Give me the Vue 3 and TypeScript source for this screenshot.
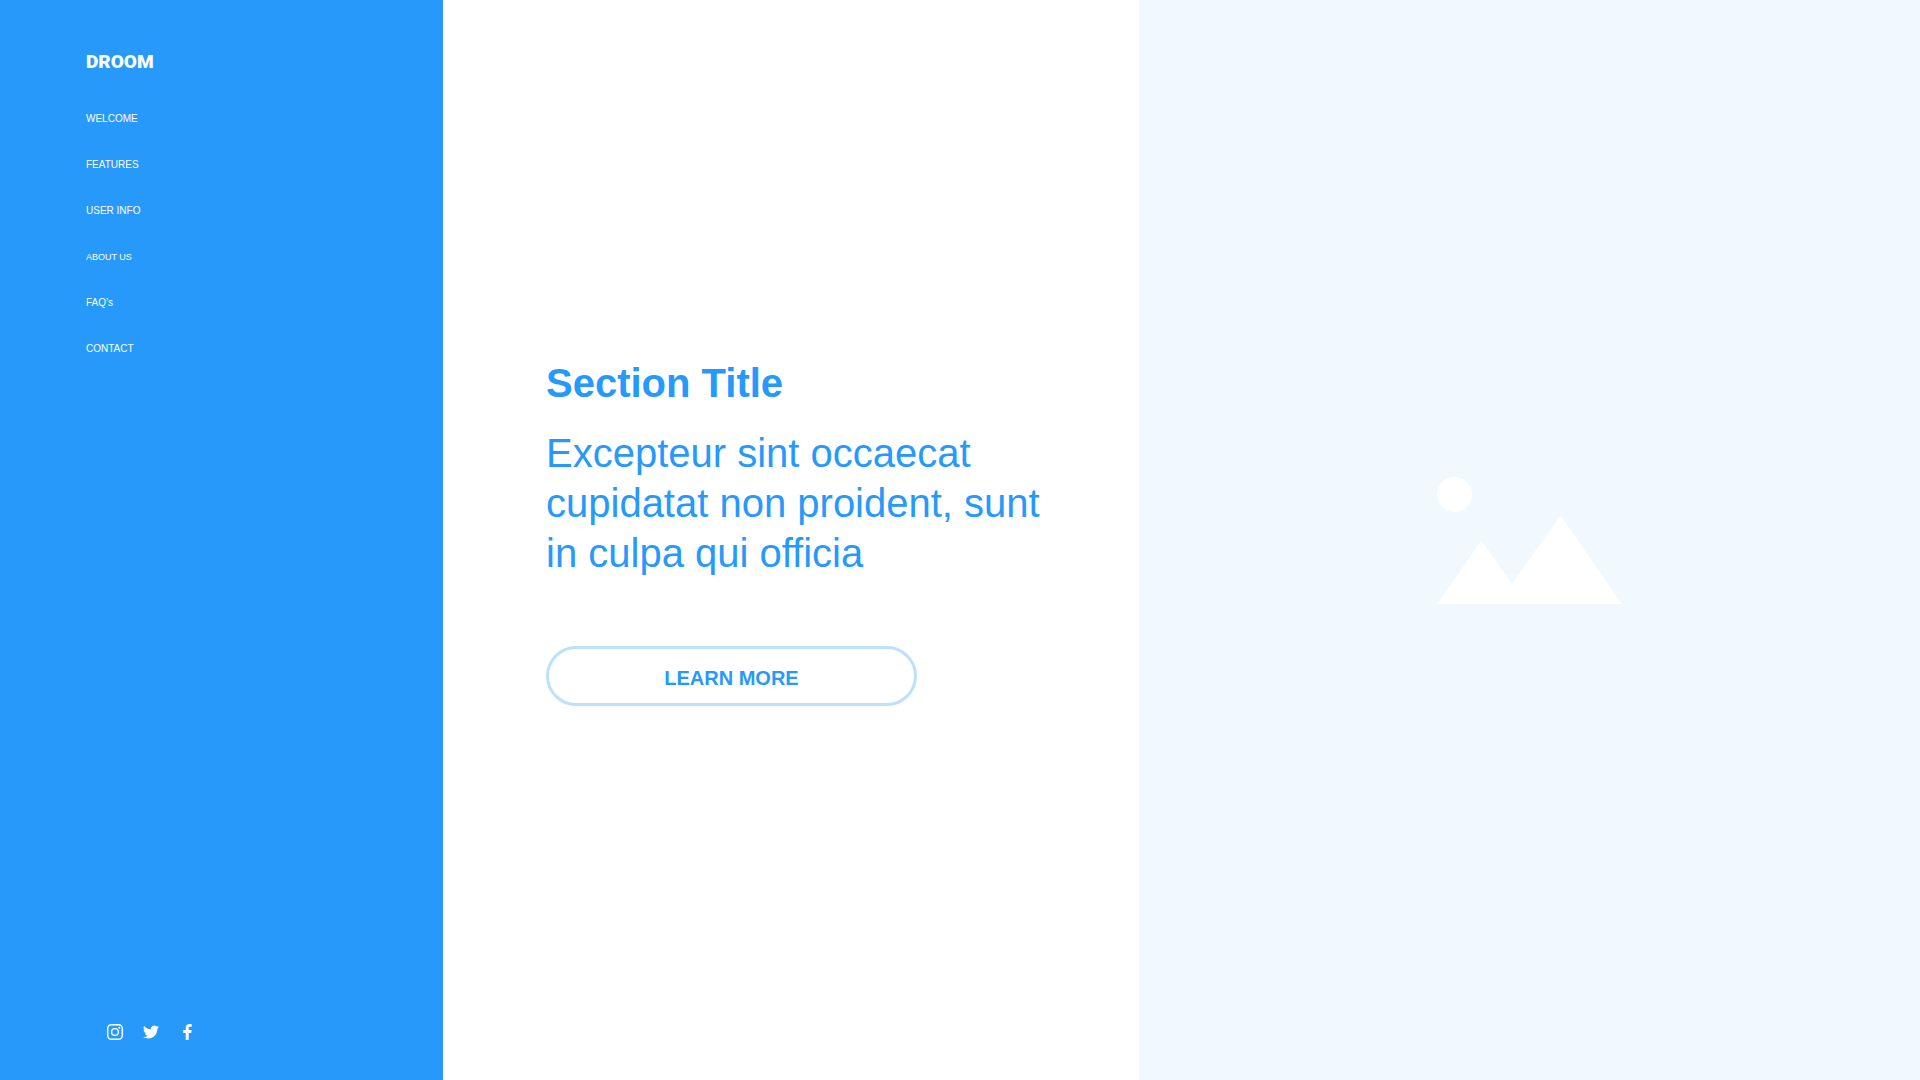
<script setup lang="ts">
interface NavItem {
  label: string
  href: string
  small?: boolean
}

const navItems: NavItem[] = [
  { label: 'WELCOME', href: '#welcome' },
  { label: 'FEATURES', href: '#features' },
  { label: 'USER INFO', href: '#user-info' },
  { label: 'ABOUT US', href: '#about', small: true },
  { label: 'FAQ’s', href: '#faq' },
  { label: 'CONTACT', href: '#contact' },
]
</script>

<template>
  <div class="page">
    <aside class="sidebar">
      <a class="logo" href="#welcome">DROOM</a>
      <nav class="nav">
        <a
          v-for="item in navItems"
          :key="item.label"
          :href="item.href"
          class="nav-link"
          :class="{ small: item.small }"
        >{{ item.label }}</a>
      </nav>
      <div class="social">
        <a href="#instagram" aria-label="Instagram">
          <svg viewBox="0 0 16 16" fill="none" stroke="currentColor">
            <rect x="0.7" y="0.7" width="14.6" height="14.6" rx="3.8" stroke-width="1.4" />
            <circle cx="8" cy="8" r="3.4" stroke-width="1.4" />
            <circle cx="12.3" cy="3.7" r="1" fill="currentColor" stroke="none" />
          </svg>
        </a>
        <a href="#twitter" aria-label="Twitter">
          <svg viewBox="0 0 24 24" fill="currentColor">
            <path d="M23.95 4.57a10 10 0 0 1-2.82.77 4.96 4.96 0 0 0 2.16-2.72c-.95.55-2 .95-3.13 1.18a4.92 4.92 0 0 0-8.38 4.48C7.69 8.1 4.07 6.13 1.64 3.16a4.92 4.92 0 0 0 1.52 6.57 4.9 4.9 0 0 1-2.23-.61v.06a4.92 4.92 0 0 0 3.95 4.83 5 5 0 0 1-2.21.08 4.94 4.94 0 0 0 4.6 3.42A9.87 9.87 0 0 1 0 19.54a13.99 13.99 0 0 0 7.55 2.21c9.05 0 14-7.5 14-13.98 0-.21 0-.42-.02-.63a9.94 9.94 0 0 0 2.42-2.57z" />
          </svg>
        </a>
        <a href="#facebook" aria-label="Facebook">
          <svg viewBox="0 0 16 16" fill="currentColor">
            <path d="M6.7 16V8.9H4.2V6.1h2.5V4c0-2.6 1.5-4 3.8-4 1 0 1.8.1 2.2.2v2.6h-1.5c-1.2 0-1.5.6-1.5 1.5v1.8h2.9l-.4 2.8H9.7V16z" />
          </svg>
        </a>
      </div>
    </aside>

    <main class="content">
      <h1 class="title">Section Title</h1>
      <p class="text">Excepteur sint occaecat cupidatat non proident, sunt in culpa qui officia</p>
      <button type="button" class="cta">LEARN MORE</button>
    </main>

    <section class="media" aria-label="Image placeholder">
      <svg class="placeholder" viewBox="0 0 186 127" fill="#fff">
        <circle cx="17.5" cy="17.5" r="17.5" />
        <path d="M0 127 44.500 63.500 75 107 123.500 38.500 185 127z" />
      </svg>
    </section>
  </div>
</template>

<style>
body {
  margin: 0;
}
</style>

<style scoped>
.page {
  display: grid;
  grid-template-columns: 443fr 696fr 781fr;
  min-height: 100vh;
  background: #fff;
  color: #2699fb;
  font-family: "Liberation Sans", Arial, sans-serif;
}

.sidebar {
  display: flex;
  flex-direction: column;
  align-items: flex-start;
  box-sizing: border-box;
  padding: 50px 86px 40px;
  background: #2699fb;
  color: #fff;
}

.sidebar a {
  color: inherit;
  text-decoration: none;
}

.logo {
  font-family: Roboto, sans-serif;
  font-size: 19px;
  font-weight: 900;
  line-height: 24px;
}

.nav {
  display: flex;
  flex-direction: column;
  align-items: flex-start;
  gap: 26px;
  margin-top: 35px;
}

.nav-link {
  font-size: 10px;
  line-height: 20px;
}

.nav-link.small {
  font-size: 9px;
}

.social {
  display: flex;
  gap: 20px;
  margin-top: auto;
  padding-left: 21px;
}

.social svg {
  display: block;
  width: 16px;
  height: 16px;
}

.content {
  display: flex;
  flex-direction: column;
  justify-content: center;
  align-items: flex-start;
  box-sizing: border-box;
  padding: 0 92px 16px 103px;
}

.title {
  margin: 0;
  font-size: 40px;
  font-weight: 700;
  line-height: 50px;
}

.text {
  margin: 20px 0 68px;
  font-size: 40px;
  line-height: 50px;
}

.cta {
  width: 371px;
  max-width: 100%;
  height: 60px;
  padding: 4px 0 0;
  border: 3px solid #bce0fd;
  border-radius: 30px;
  background: #fff;
  color: #2699fb;
  font-family: inherit;
  font-size: 20px;
  font-weight: 700;
  line-height: 24px;
}

.media {
  display: flex;
  justify-content: center;
  align-items: center;
  background: #f1f9ff;
}

.placeholder {
  width: 186px;
  height: 127px;
}
</style>
